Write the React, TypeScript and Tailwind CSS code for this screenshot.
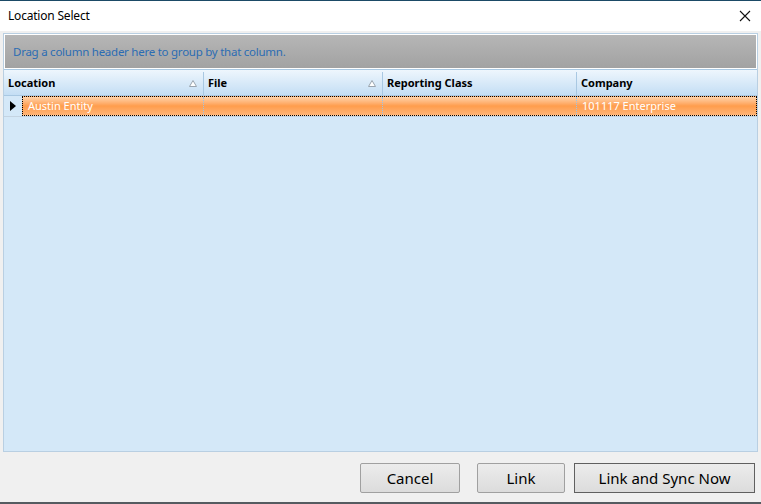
import React from "react";

const font = { fontFamily: '"Noto Sans", "Open Sans", sans-serif' };

function SortGlyph() {
  return (
    <svg width="8" height="7" viewBox="0 0 8 7" className="shrink-0">
      <path d="M4 0.5 L7.5 6.5 L0.5 6.5 Z" fill="#ffffff" stroke="#9aa4ae" strokeWidth="1" />
    </svg>
  );
}

export default function App() {
  return (
    <div className="w-[761px] h-[504px] flex flex-col bg-[#f0f0f0] border-t border-[#1b4a66] overflow-hidden" style={font}>
      {/* title bar */}
      <div className="h-[30px] bg-white flex items-center justify-between pl-[8px] pr-[10px]">
        <span className="text-[12px] text-black tracking-[-0.2px]">Location Select</span>
        <svg width="12" height="12" viewBox="0 0 12 12">
          <path d="M1 1 L11 11 M11 1 L1 11" stroke="#111" strokeWidth="1.1" />
        </svg>
      </div>

      {/* grid */}
      <div className="mt-[2px] mx-[3px] h-[419px] border border-[#b9cfe2] bg-[#d4e8f8] flex flex-col">
        <div className="h-[35px] border border-white bg-gradient-to-b from-[#b6b6b6] to-[#a2a2a2] flex items-center pl-[8px] pt-[1px]">
          <span className="text-[11.5px] tracking-[-0.25px] text-[#2b6cb3]">Drag a column header here to group by that column.</span>
        </div>
        <div className="h-[27px] pt-[2px] border-t border-b border-[#a9c8e2] bg-gradient-to-b from-[#eef6fd] to-[#c4def4] flex text-[11px] font-bold text-black">
          <div className="w-[200px] flex items-center justify-between pl-[4px] pr-[6px] border-r border-[#a9c8e2]">
            <span>Location</span>
            <SortGlyph />
          </div>
          <div className="w-[179px] flex items-center justify-between pl-[4px] pr-[6px] border-r border-[#a9c8e2]">
            <span>File</span>
            <SortGlyph />
          </div>
          <div className="w-[194px] flex items-center pl-[4px] border-r border-[#a9c8e2]">
            <span>Reporting Class</span>
          </div>
          <div className="flex-1 flex items-center pl-[4px]">
            <span>Company</span>
          </div>
        </div>
        <div className="h-[21px] flex border-b border-[#c4d4e2]">
          <div className="w-[18px] flex items-center justify-center bg-[#d4e8f8]">
            <svg width="6" height="10" viewBox="0 0 6 10">
              <path d="M0 0 L6 5 L0 10 Z" fill="#000" />
            </svg>
          </div>
          <div className="flex-1 flex border border-dotted border-black bg-gradient-to-b from-[#ffd3aa] via-[#ff9d4c] to-[#ffb476] text-[11px] text-white">
            <div className="w-[181px] flex items-center pl-[5px] border-r border-dotted border-[#9cc3e6]">Austin Entity</div>
            <div className="w-[179px] border-r border-dotted border-[#9cc3e6]"></div>
            <div className="w-[194px] border-r border-dotted border-[#9cc3e6]"></div>
            <div className="flex-1 flex items-center pl-[5px]">101117 Enterprise</div>
          </div>
        </div>
        <div className="flex-1"></div>
      </div>

      {/* buttons */}
      <div className="flex justify-end items-start pt-[11px] pr-[6px] gap-[9px]">
        <button className="w-[100px] h-[30px] mr-[8px] rounded-[2px] border border-[#a0a0a0] bg-gradient-to-b from-[#ececec] to-[#dcdcdc] text-[15px] text-black">
          Cancel
        </button>
        <button className="w-[88px] h-[30px] rounded-[2px] border border-[#a0a0a0] bg-gradient-to-b from-[#ececec] to-[#dcdcdc] text-[15px] text-black">
          Link
        </button>
        <button className="w-[181px] h-[30px] border border-[#606060] bg-gradient-to-b from-[#ececec] to-[#dcdcdc] text-[15px] text-black">
          Link and Sync Now
        </button>
      </div>
      <div className="flex-1"></div>
      <div className="h-[2px] bg-[#555b60]"></div>
    </div>
  );
}
